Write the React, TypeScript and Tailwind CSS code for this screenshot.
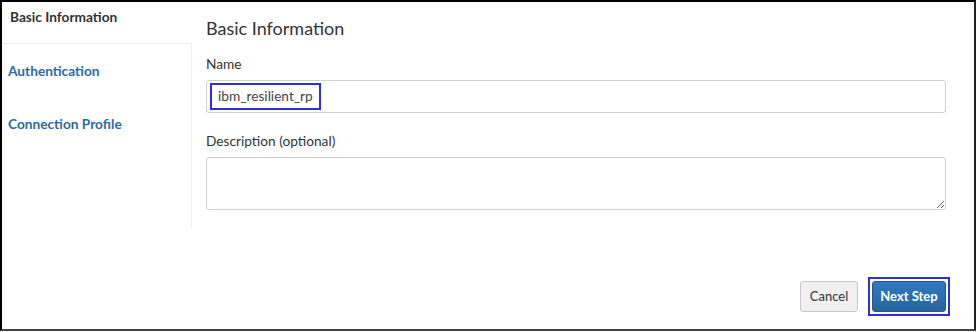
export default function App() {
  return (
    <div className="w-[977px] h-[332px] bg-white font-['Lato',sans-serif]">
      <div className="relative w-[976px] h-[331px] border-2 border-black border-r-[#222] border-b-[#444] flex">
        <aside className="w-[190px] shrink-0 flex flex-col">
          <div className="h-[41px] pl-[8px] pt-[6px] text-[13.7px] leading-[18px] font-bold text-[#333]">
            Basic Information
          </div>
          <div className="h-[184px] border-t border-r border-[#eee] flex flex-col pl-[6px]">
            <div className="pt-[18px] text-[13.7px] leading-[18px] font-bold text-[#2d6a9f]">Authentication</div>
            <div className="pt-[35px] text-[13.7px] leading-[18px] font-bold text-[#2d6a9f]">Connection Profile</div>
          </div>
        </aside>
        <main className="flex-1 flex flex-col pl-[14px] pr-[28px]">
          <h1 className="mt-[15px] text-[18px] leading-[22px] text-[#333]">Basic Information</h1>
          <label className="mt-[16px] text-[13.7px] leading-[18px] text-[#333]">Name</label>
          <div className="mt-[7px] h-[33px] border border-[#ccd0d4] rounded-[3px] flex items-center pl-[3px]">
            <span className="border-[2.5px] border-[#3030d0] px-[6px] h-[27px] flex items-center text-[13.7px] text-[#444]">
              ibm_resilient_rp
            </span>
          </div>
          <label className="mt-[19px] text-[13.7px] leading-[18px] text-[#333]">Description (optional)</label>
          <textarea className="mt-[7px] h-[53px] border border-[#ccd0d4] rounded-[3px] resize-y" />
          <div className="mt-auto mb-[13px] flex justify-end items-center gap-[10px]">
            <button className="h-[31px] w-[58px] rounded-[3px] border border-[#c8c8c8] bg-[#f0f0f0] text-[13px] text-[#333]">
              Cancel
            </button>
            <div className="border-[2.5px] border-[#3030d0] p-[2px] -mr-[4px]">
              <button className="h-[31px] w-[74px] rounded-[3px] bg-gradient-to-b from-[#3079bd] to-[#25659f] border border-[#1f5a8f] text-[13px] font-bold text-white">
                Next Step
              </button>
            </div>
          </div>
        </main>
      </div>
    </div>
  );
}
